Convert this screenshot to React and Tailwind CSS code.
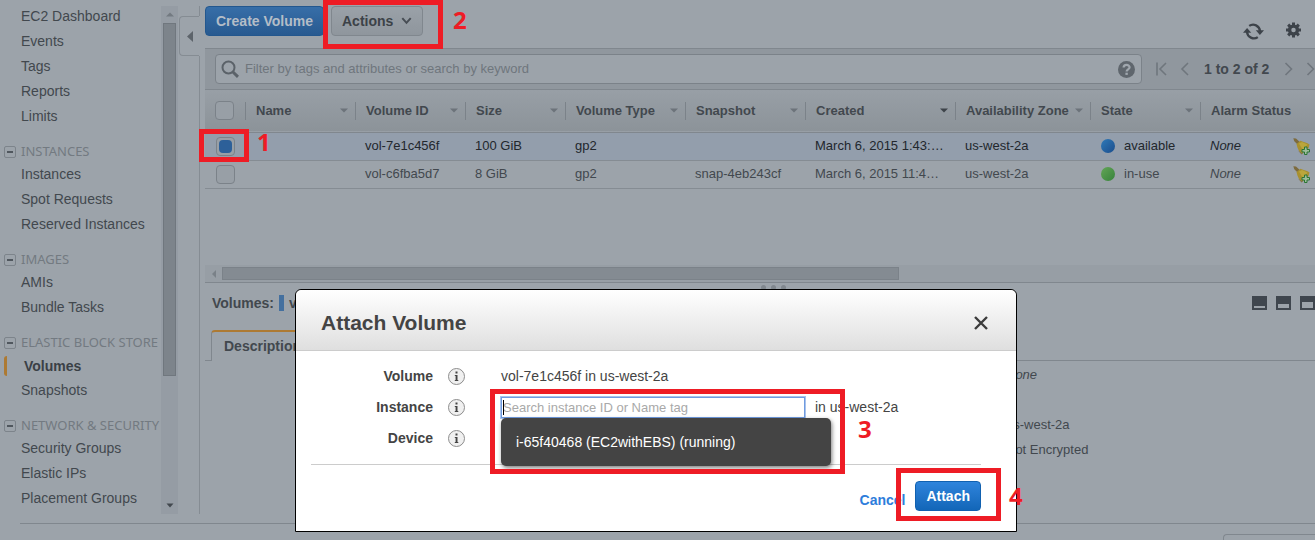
import React from "react";

const navTop = ["EC2 Dashboard", "Events", "Tags", "Reports", "Limits"];

const navGroups = [
  { title: "INSTANCES", items: ["Instances", "Spot Requests", "Reserved Instances"] },
  { title: "IMAGES", items: ["AMIs", "Bundle Tasks"] },
  { title: "ELASTIC BLOCK STORE", items: ["Volumes", "Snapshots"] },
  { title: "NETWORK & SECURITY", items: ["Security Groups", "Elastic IPs", "Placement Groups"] },
];

const columns = [
  { label: "Name", width: "w-[110px]", sort: "idle" },
  { label: "Volume ID", width: "w-[110px]", sort: "idle" },
  { label: "Size", width: "w-[100px]", sort: "idle" },
  { label: "Volume Type", width: "w-[120px]", sort: "idle" },
  { label: "Snapshot", width: "w-[120px]", sort: "idle" },
  { label: "Created", width: "w-[150px]", sort: "active" },
  { label: "Availability Zone", width: "w-[135px]", sort: "idle" },
  { label: "State", width: "w-[110px]", sort: "idle" },
  { label: "Alarm Status", width: "", sort: "none" },
];

const volumes = [
  {
    id: "vol-7e1c456f", size: "100 GiB", type: "gp2", snapshot: "",
    created: "March 6, 2015 1:43:…", zone: "us-west-2a", state: "available", selected: true,
  },
  {
    id: "vol-c6fba5d7", size: "8 GiB", type: "gp2", snapshot: "snap-4eb243cf",
    created: "March 6, 2015 11:4…", zone: "us-west-2a", state: "in-use", selected: false,
  },
];

function Caret({ active }) {
  return (
    <svg width="8" height="5" viewBox="0 0 8 5" className={active ? "text-[#3d4349]" : "text-[#6c737a]"} aria-hidden="true">
      <path d="M0 0.5h8L4 4.5z" fill="currentColor" />
    </svg>
  );
}

function NavItem({ label }) {
  if (label === "Volumes") {
    return (
      <li className="flex h-[25px] items-center pl-1">
        <span className="h-5 w-[3px] rounded-l-sm bg-[#ad7a33]" />
        <a href="#volumes" className="pl-[17px] font-bold text-[#3a4046]">{label}</a>
      </li>
    );
  }
  return (
    <li className="h-[25px] pl-[21px] leading-[25px]">
      <a href="#nav">{label}</a>
    </li>
  );
}

function Sidebar() {
  return (
    <div className="flex shrink-0">
      <nav className="w-[161px] whitespace-nowrap pt-1 text-sm">
        <ul>
          {navTop.map((n) => <NavItem key={n} label={n} />)}
        </ul>
        {navGroups.map((g) => (
          <section key={g.title}>
            <h2 className="flex h-[33px] items-center gap-[5px] pl-1 pt-3 font-['Noto_Sans',sans-serif] text-[13px] leading-[19px] text-[#737a81]">
              <button type="button" aria-label={"Collapse " + g.title} className="flex size-3 shrink-0 items-center justify-center rounded-xs border border-[#7d848b]">
                <span className="h-[2px] w-[6px] bg-[#50575e]" />
              </button>
              {g.title}
            </h2>
            <ul>
              {g.items.map((n) => <NavItem key={n} label={n} />)}
            </ul>
          </section>
        ))}
      </nav>
      <div className="mt-[6px] flex w-[17px] flex-col items-center bg-[#959ca4]">
        <div className="flex h-[17px] shrink-0 items-center">
          <svg width="8" height="5" viewBox="0 0 8 5" aria-hidden="true"><path d="M0 4.5h8L4 0.5z" fill="#737a81" /></svg>
        </div>
        <div className="h-[353px] w-[13px] border border-[#70777e] bg-[#7d848b]" />
        <div className="mt-auto flex h-[17px] items-center">
          <svg width="8" height="5" viewBox="0 0 8 5" aria-hidden="true"><path d="M0.5 0.5h7L4 4.5z" fill="#42484e" /></svg>
        </div>
      </div>
      <div className="mt-[6px] flex w-[22px] flex-col">
        <div className="h-[10px] border-r border-[#858c93]" />
        <button type="button" aria-label="Collapse navigation" className="mr-px ml-px flex h-10 items-center justify-center rounded-l-sm border border-r-0 border-[#858c93]">
          <svg width="6" height="11" viewBox="0 0 6 11" aria-hidden="true"><path d="M6 0v11L0 5.5z" fill="#5d646b" /></svg>
        </button>
        <div className="flex-1 border-r border-[#858c93]" />
      </div>
    </div>
  );
}

function Toolbar() {
  return (
    <div className="flex h-12 items-center">
      <div className="flex gap-[7px] pb-[6px] text-sm font-bold">
        <button type="button" className="h-[30px] rounded border border-[#23578e] bg-linear-to-b from-[#376ea8] to-[#285a90] px-[10px] text-[#b4bdc7]">Create Volume</button>
        <button type="button" className="flex h-[30px] items-center gap-2 rounded border border-[#80878e] bg-linear-to-b from-[#9aa1a8] to-[#8f969d] px-[10px] text-[#3c4248]">
          Actions
          <svg width="11" height="8" viewBox="0 0 10 8" fill="none" aria-hidden="true"><path d="M0.8 1.2 5 5.8 9.2 1.2" stroke="#474d54" strokeWidth="2" /></svg>
        </button>
      </div>
      <div className="ml-auto flex items-center gap-[22px] pr-[14px] pt-[14px]">
        <button type="button" aria-label="Refresh">
          <svg width="21" height="17" viewBox="0 0 21 17" fill="none" aria-hidden="true">
            <path d="M6.2 2.9A6.9 6.9 0 0 1 17 8" stroke="#3d434a" strokeWidth="2.3" />
            <path d="M14.8 14.1A6.9 6.9 0 0 1 4 9" stroke="#3d434a" strokeWidth="2.3" />
            <path d="M12.8 7.2H21L16.9 12z" fill="#3d434a" />
            <path d="M0 9.8h8.2L4.1 5z" fill="#3d434a" />
          </svg>
        </button>
        <button type="button" aria-label="Settings" className="pb-[2px]">
          <svg width="15" height="16" viewBox="0 0 16 16" fill="none" aria-hidden="true">
            <circle cx="8" cy="8" r="4.2" stroke="#3d434a" strokeWidth="3.6" />
            <path d="M8 0v4M8 12v4M0 8h4M12 8h4M2.3 2.3l2.9 2.9M10.8 10.8l2.9 2.9M2.3 13.7l2.9-2.9M10.8 5.2l2.9-2.9" stroke="#3d434a" strokeWidth="3.2" />
          </svg>
        </button>
      </div>
    </div>
  );
}

function Chevron({ right, bar }) {
  return (
    <svg width="11" height="14" viewBox="0 0 11 14" fill="none" stroke="#6f767d" strokeWidth="1.6" aria-hidden="true">
      {bar && <path d="M1 0.5v13" />}
      <path d={right ? "M2.5 1 8.5 7 2.5 13" : "M10 1 4 7 10 13"} />
    </svg>
  );
}

function SearchBar() {
  return (
    <div className="flex h-[42px] items-center border-y border-[#80878e] bg-[#90979e] pl-[10px]">
      <label className="flex h-[30px] min-w-0 flex-1 items-center rounded border border-[#7b8289] bg-[#9ca3aa] pr-[6px] pl-[5px]">
        <svg width="18" height="18" viewBox="0 0 18 18" fill="none" stroke="#5b6269" aria-hidden="true">
          <circle cx="7.5" cy="7.5" r="6" strokeWidth="2" />
          <path d="M12 12l5 4.8" strokeWidth="3" />
        </svg>
        <input type="text" aria-label="Filter volumes" placeholder="Filter by tags and attributes or search by keyword" className="ml-[6px] min-w-0 flex-1 bg-transparent text-[13px] outline-none placeholder:text-[#6f767d]" />
        <svg width="17" height="17" viewBox="0 0 17 17" fill="none" aria-hidden="true">
          <circle cx="8.5" cy="8.5" r="8.5" fill="#5f666d" />
          <path d="M5.6 6.6C5.6 3 11.6 3.2 11.6 6.3 11.6 8.5 8.6 8.3 8.6 10.6" stroke="#a0a7ae" strokeWidth="2.2" />
          <rect x="7.4" y="11.7" width="2.4" height="2.2" fill="#a0a7ae" />
        </svg>
      </label>
      <div className="flex w-[173px] shrink-0 items-center overflow-hidden pl-[14px] whitespace-nowrap">
        <button type="button" aria-label="First page"><Chevron bar /></button>
        <button type="button" aria-label="Previous page" className="ml-[11px]"><Chevron /></button>
        <span className="ml-[15px] w-[70px] text-center text-sm font-bold text-[#42484e]">1 to 2 of 2</span>
        <button type="button" aria-label="Next page" className="ml-[14px]"><Chevron right /></button>
        <button type="button" aria-label="Last page" className="ml-[11px] shrink-0"><Chevron right /></button>
      </div>
    </div>
  );
}

function Bell() {
  return (
    <svg width="17" height="17" viewBox="0 0 17 17" aria-hidden="true">
      <path d="M0.3 0.3 3 0.5 7 4.2 4.6 6.4 1.3 3.2z" fill="#7d6b3d" />
      <path d="M3.5 6 7.5 2.8C11 4.6 14 4.5 16.5 6.5L15.5 10 9 15.8C6.5 14.5 4.500 11 3.5 6z" fill="#a8902f" />
      <path d="M6 5.5 9 4 14.500 6.500 10 12.500z" fill="#bba63c" />
      <path d="M5 12.5 10 15.5 8.5 16.5z" fill="#82734a" />
      <path d="M11.500 9h2.500v2.500h2.500v2.500H14v2.500h-2.500V14H9v-2.500h2.500z" fill="#9dbd9c" stroke="#2b7434" strokeWidth="1" />
    </svg>
  );
}

function VolumeTable() {
  return (
    <table className="w-full table-fixed border-collapse text-left text-[13px] whitespace-nowrap">
      <thead>
        <tr className="h-[42px] border-b border-[#80878e] bg-linear-to-b from-[#989fa6] to-[#8c9399]">
          <th className="w-10 pl-[10px]">
            <input type="checkbox" aria-label="Select all volumes" className="block size-[19px] appearance-none rounded border border-[#7b8289] bg-[#989fa6]" />
          </th>
          {columns.map((c) => (
            <th key={c.label} scope="col" className={c.width}>
              <div className="flex h-[18px] items-center justify-between border-l border-[#7b8289] pr-[7px] pl-[10px] font-bold text-[#42484e]">
                {c.label}
                {c.sort !== "none" && <Caret active={c.sort === "active"} />}
              </div>
            </th>
          ))}
        </tr>
      </thead>
      <tbody>
        {volumes.map((v) => (
          <tr key={v.id} className={v.selected ? "h-7 border-b border-[#858c93] bg-[#939eac] text-[#22272d]" : "h-7 border-b border-[#858c93] text-[#42484e]"}>
            <td className="pl-[11px]">
              <input type="checkbox" defaultChecked={v.selected} aria-label={"Select " + v.id} className="block size-[19px] appearance-none rounded border border-[#7b8289] bg-[#989fa6] p-[2px] before:block before:size-full before:rounded-sm checked:before:bg-[#2d6099]" />
            </td>
            <td />
            <td className="pl-[10px]">{v.id}</td>
            <td className="pl-[10px]">{v.size}</td>
            <td className="pl-[10px]">{v.type}</td>
            <td className="pl-[10px]">{v.snapshot}</td>
            <td className="pl-[10px]">{v.created}</td>
            <td className="pl-[10px]">{v.zone}</td>
            <td className="pl-[11px]">
              <div className="flex items-center gap-[9px]">
                <span className={v.selected ? "size-[14px] rounded-full bg-linear-to-br from-[#2f7ab8] to-[#1b4d8c]" : "size-[14px] rounded-full bg-linear-to-br from-[#63a557] to-[#36833b]"} />
                {v.state}
              </div>
            </td>
            <td className="pr-[5px] pl-[10px]">
              <div className="flex items-center justify-between">
                <em>None</em>
                <button type="button" aria-label={"Create alarm for " + v.id}><Bell /></button>
              </div>
            </td>
          </tr>
        ))}
      </tbody>
    </table>
  );
}

function PaneIcon({ top }) {
  return (
    <svg width="15" height="14" viewBox="0 0 15 14" aria-hidden="true">
      <path d="M0 0h15v14H0z" fill="#3f464e" />
      <rect x="2" y={top} width="11" height={12 - top} fill="#9ca3aa" />
    </svg>
  );
}

function DetailPane() {
  return (
    <div className="text-sm">
      <div className="flex h-2 items-center justify-center gap-[5px] pl-[26px]">
        <span className="size-[5px] rounded-full bg-[#80878e]" />
        <span className="size-[5px] rounded-full bg-[#80878e]" />
        <span className="size-[5px] rounded-full bg-[#80878e]" />
      </div>
      <div className="flex h-6 items-center pl-[7px] font-bold text-[#42484e]">
        Volumes:
        <span className="mr-[5px] ml-[5px] h-4 w-[5px] bg-[#44709f]" />
        vol-7e1c456f
        <div className="ml-auto flex gap-[9px] overflow-hidden pb-px">
          <button type="button" aria-label="Small pane"><PaneIcon top={10} /></button>
          <button type="button" aria-label="Medium pane"><PaneIcon top={8} /></button>
          <button type="button" aria-label="Large pane"><PaneIcon top={6} /></button>
        </div>
      </div>
      <div className="flex pt-[15px]">
        <span className="w-[6px] border-b border-[#80878e]" />
        <button type="button" className="h-[31px] rounded-t-sm border-t-2 border-r border-l border-t-[#ad7a33] border-r-[#80878e] border-l-[#80878e] px-3 pb-[2px] font-bold text-[#42484e]">Description</button>
        <span className="flex-1 border-b border-[#80878e]" />
      </div>
      <dl className="grid grid-cols-[801px_1fr] pt-px text-[13px] leading-[25px]">
        <dt /><dd className="italic">None</dd>
        <dt className="h-[25px]" /><dd />
        <dt /><dd>us-west-2a</dd>
        <dt /><dd>Not Encrypted</dd>
      </dl>
    </div>
  );
}

function InfoButton({ label }) {
  return (
    <button type="button" aria-label={"About " + label} className="size-[17px] self-center">
      <svg width="17" height="17" viewBox="0 0 17 17" aria-hidden="true">
        <circle cx="8.5" cy="8.5" r="8" fill="#f0f0f0" stroke="#8c8c8c" />
        <path d="M7.500 3.500h2v2h-2zM6.800 7h2.700v5h0.800v1h-3.500v-1h0.800V8h-0.800z" fill="#444" />
      </svg>
    </button>
  );
}

function Mark({ children, className }) {
  return <span className={"pointer-events-none absolute font-['Open_Sans',sans-serif] text-2xl leading-6 font-bold text-[#ee1c25] " + className}>{children}</span>;
}

function AttachDialog() {
  return (
    <div className="absolute inset-x-0 top-[289px] flex justify-center pr-[3px]">
      <div role="dialog" aria-labelledby="dialog-title" className="relative w-[722px] rounded-t-md border border-black bg-white text-sm text-[#444]">
        <header className="flex h-[61px] items-center justify-between rounded-t-md border-b border-[#ccc] bg-linear-to-b from-white to-[#dfdfdf] pr-7 pl-[25px]">
          <h1 id="dialog-title" className="pt-[6px] text-[21px] font-bold">Attach Volume</h1>
          <button type="button" aria-label="Close" className="pt-[6px]">
            <svg width="14" height="14" viewBox="0 0 14 14" aria-hidden="true"><path d="M1 1l12 12M13 1 1 13" stroke="#3c3c3c" strokeWidth="2.4" /></svg>
          </button>
        </header>
        <form className="mr-[35px] ml-[15px]">
          <div className="grid grid-cols-[122px_17px_1fr] gap-x-[15px] border-b border-[#ccc] pt-[10px] pb-[10px] leading-[31px]">
            <span className="text-right font-bold">Volume</span>
            <InfoButton label="volume" />
            <span className="pl-[21px]">vol-7e1c456f in us-west-2a</span>
            <label htmlFor="instance" className="text-right font-bold">Instance</label>
            <InfoButton label="instance" />
            <div className="relative flex items-center gap-[10px] pl-[21px] whitespace-nowrap">
              <input id="instance" type="text" placeholder="Search instance ID or Name tag" className="h-[21px] w-[304px] border border-[#6f9be0] px-px text-[13px] leading-4 outline-none ring-1 ring-[#6f9be0]/60 placeholder:text-[#a9a9a9]" />
              <span className="absolute left-[23px] h-[15px] w-px bg-black" />
              in us-west-2a
              <ul className="absolute top-[26px] left-[21px] h-12 w-[330px] rounded-[5px] bg-[#444] px-[15px] leading-[48px] text-white shadow-[1px_2px_4px_rgba(0,0,0,0.5)]">
                <li>i-65f40468 (EC2withEBS) (running)</li>
              </ul>
            </div>
            <span className="text-right font-bold">Device</span>
            <InfoButton label="device" />
            <span />
          </div>
          <div className="flex items-center justify-end gap-[10px] pt-4 pb-5 font-bold">
            <button type="button" className="pt-[7px] text-[#2e7ddb]">Cancel</button>
            <button type="button" className="h-[30px] rounded border border-[#1161b0] bg-linear-to-b from-[#2e84dc] to-[#1266b8] px-[10px] text-white">Attach</button>
          </div>
        </form>
        <div className="pointer-events-none absolute top-[99px] left-[194px] h-[85px] w-[355px] border-[5px] border-[#ee1c25]" />
        <Mark className="top-[127px] left-[562px]">3</Mark>
        <div className="pointer-events-none absolute top-[178px] left-[600px] h-[53px] w-[105px] border-[5px] border-[#ee1c25]" />
        <Mark className="top-[194px] left-[713px]">4</Mark>
      </div>
    </div>
  );
}

export default function App() {
  return (
    <div className="relative flex h-screen flex-col overflow-hidden bg-[#9ca3aa] font-['Liberation_Sans',Arial,sans-serif] text-[#42484e]">
      <div className="flex min-h-0 flex-1">
        <Sidebar />
        <main className="ml-[5px] flex min-w-0 flex-1 flex-col">
          <Toolbar />
          <SearchBar />
          <div className="min-h-[175px]">
            <VolumeTable />
          </div>
          <div className="flex h-[18px] shrink-0 items-center border-b border-[#80878e] bg-[#979ea5]">
            <span className="flex w-[17px] justify-center">
              <svg width="4" height="8" viewBox="0 0 4 8" aria-hidden="true"><path d="M4 0v8L0 4z" fill="#7a8188" /></svg>
            </span>
            <span className="h-[13px] w-[61%] border border-[#7b8289] bg-[#848b92]" />
          </div>
          <DetailPane />
        </main>
      </div>
      <footer className="h-[26px] shrink-0 pt-[9px] pl-5">
        <div className="flex justify-end border-t border-[#80878e] pt-[10px]">
          <div className="h-6 w-[92px] rounded-tl border-t border-l border-[#80878e]" />
        </div>
      </footer>

      <AttachDialog />

      <div className="pointer-events-none absolute top-[129px] left-[199px] h-[33px] w-[50px] border-[5px] border-[#ee1c25]" />
      <Mark className="top-[130px] left-[257px]">1</Mark>
      <div className="pointer-events-none absolute top-0 left-[323px] h-[49px] w-[120px] border-[5px] border-[#ee1c25]" />
      <Mark className="top-2 left-[453px]">2</Mark>
    </div>
  );
}
